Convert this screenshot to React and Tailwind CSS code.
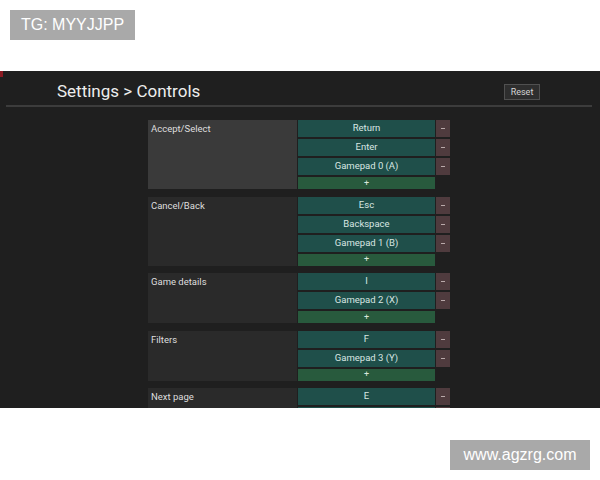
const rows = [
  { label: 'Accept/Select', binds: ['Return', 'Enter', 'Gamepad 0 (A)'], active: true },
  { label: 'Cancel/Back', binds: ['Esc', 'Backspace', 'Gamepad 1 (B)'] },
  { label: 'Game details', binds: ['I', 'Gamepad 2 (X)'] },
  { label: 'Filters', binds: ['F', 'Gamepad 3 (Y)'] },
  // last row runs off the bottom of the panel, only its first key shows
  { label: 'Next page', binds: ['E', ''], cut: true },
]

function ControlRow({ row }) {
  return (
    <div className="flex gap-[1px]">
      <div
        className={
          'w-[149px] shrink-0 px-[3px] pt-[3px] text-[9.5px] leading-[12px] text-[#dedede] ' +
          (row.active ? 'bg-[#3a3a3a]' : 'bg-[#2a2a2a]')
        }
      >
        {row.label}
      </div>
      <div className="flex flex-col gap-[2px]">
        {row.binds.map((b, i) => (
          <div key={i} className="flex gap-[1px]">
            <div className="w-[137px] h-[17px] bg-[#1f4f4a] flex items-center justify-center text-[9.5px] text-[#d8e6e2]">
              {b}
            </div>
            <div className="w-[14px] h-[17px] bg-[#4f3b3e] flex items-center justify-center">
              {b && <div className="w-[4px] h-[1px] bg-[#b9a9aa]" />}
            </div>
          </div>
        ))}
        {!row.cut && (
          <div className="w-[137px] h-[12px] bg-[#285a3d] flex items-center justify-center text-[9px] leading-none text-[#d8e6dc]">
            +
          </div>
        )}
      </div>
    </div>
  )
}

export default function App() {
  return (
    <div className="w-[600px] h-[480px] bg-white flex flex-col overflow-hidden font-['Liberation_Sans',Arial,sans-serif]">
      <div className="ml-[10px] mt-[10px] w-[125px] h-[30px] bg-[#a9a9a9] text-white text-[16px] flex items-center justify-center">
        TG: MYYJJPP
      </div>

      <div className="mt-[31px] h-[337px] bg-[#1f1f1f] relative overflow-hidden font-['Roboto',sans-serif]">
        <div className="absolute left-0 top-0 w-[3px] h-[6px] bg-[#8a1a22]" />
        <div className="flex items-center justify-between pl-[57px] pr-[60px] pt-[7px] h-[33px]">
          <h1 className="text-[17px] text-[#ededed] leading-none">Settings &gt; Controls</h1>
          <button className="w-[36px] h-[16px] mt-[2px] bg-[#2e2e2e] border border-[#505050] text-[9px] text-[#d4d4d4] leading-none">
            Reset
          </button>
        </div>
        <div className="mx-[6px] mt-[1px] h-[2px] w-[586px] bg-[#3c3c3c]" />

        <div className="ml-[148px] mt-[13px] flex flex-col gap-[7.5px]">
          {rows.map((r) => (
            <ControlRow key={r.label} row={r} />
          ))}
        </div>
      </div>

      <div className="self-end mr-[10px] mt-[32px] w-[140px] h-[30px] bg-[#a9a9a9] text-white text-[16px] flex items-center justify-center">
        www.agzrg.com
      </div>
    </div>
  )
}
